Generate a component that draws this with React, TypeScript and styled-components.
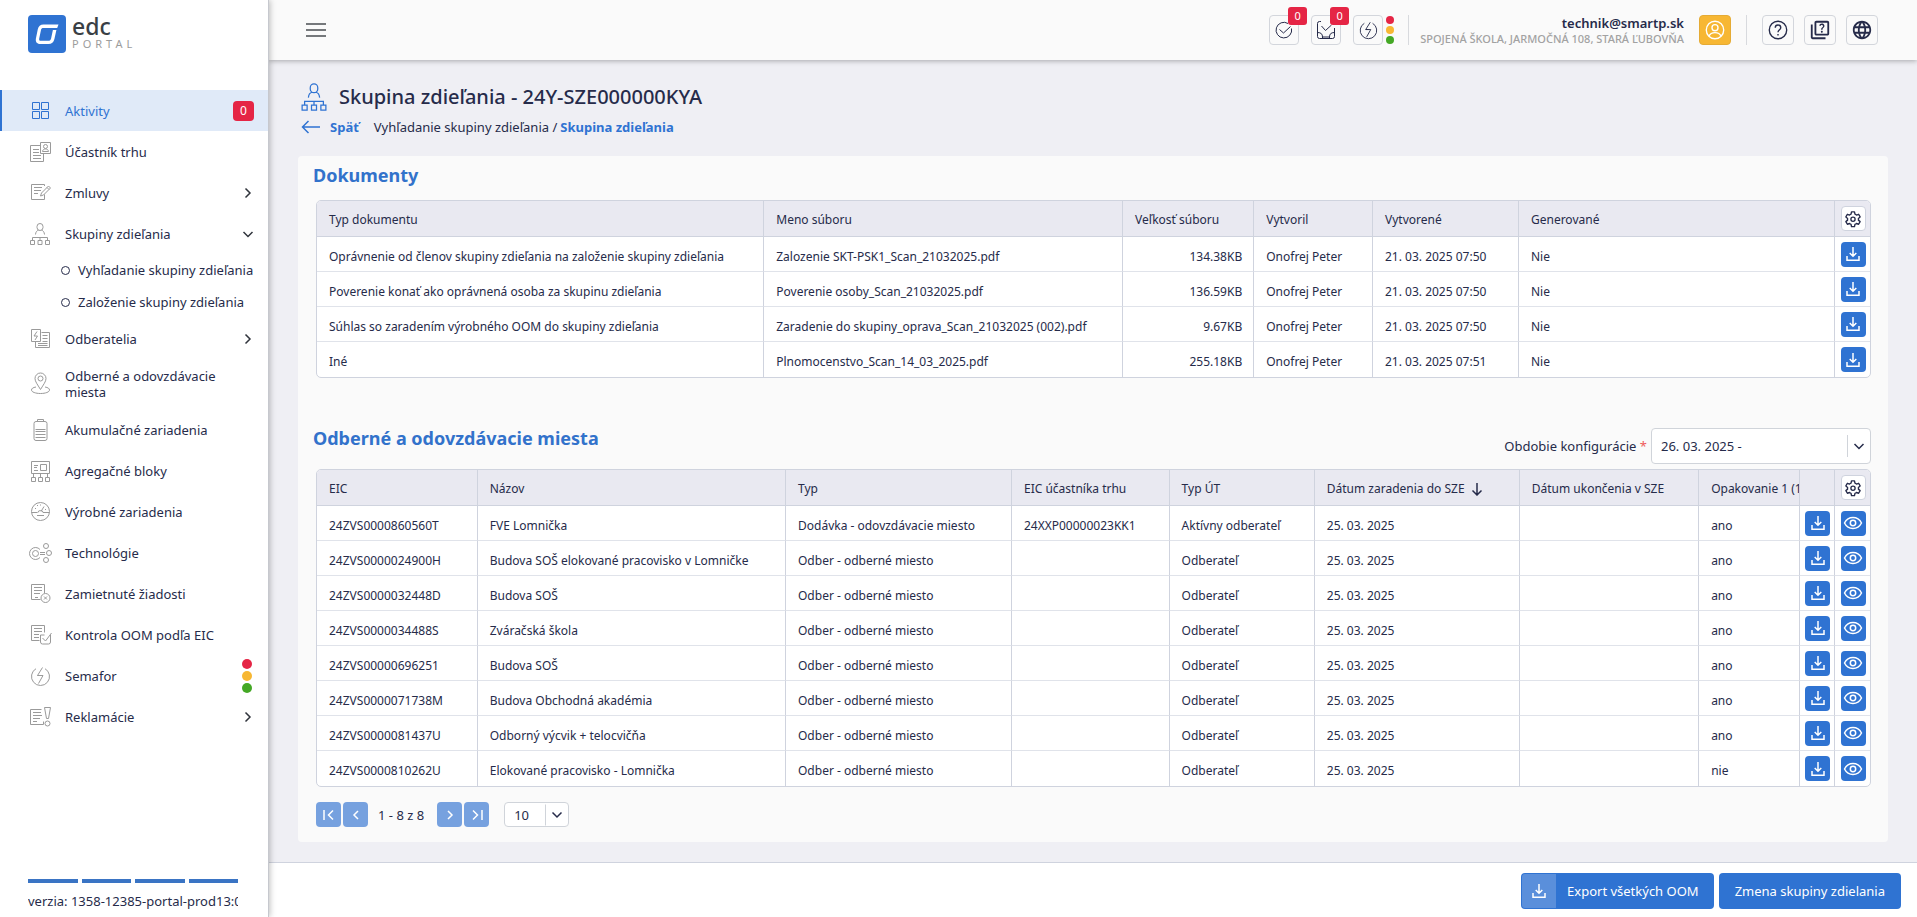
import React from 'react';
import styled, { createGlobalStyle, css } from 'styled-components';
import { MdLanguage, MdOutlineQuiz } from 'react-icons/md';

const c = {
  blue: '#2f73d2',
  heading: '#3272cb',
  text: '#262b4a',
  grey: '#9a9a9a',
  line: '#cfd3de',
  rowLine: '#e0e3ea',
  head: '#e9e9f1',
  page: '#efeff4',
  card: '#fafafa',
  red: '#e52545',
  yellow: '#f7b733',
  green: '#44a825',
};

const GlobalStyle = createGlobalStyle`
  *, *::before, *::after { box-sizing: border-box; }
  html, body, #root { height: 100%; }
  body {
    margin: 0;
    background: ${c.page};
    color: ${c.text};
    font-family: 'Noto Sans', 'Open Sans', sans-serif;
    font-size: 13px;
    line-height: 16px;
  }
  button, select { font: inherit; color: inherit; cursor: pointer; }
  svg { display: block; flex: none; }
  a { color: inherit; text-decoration: none; }
  h1, h2, ul, p { margin: 0; padding: 0; }
  ul { list-style: none; }
`;

/* ---------- page frame ---------- */

const Shell = styled.div`
  display: grid;
  grid-template-columns: 269px minmax(0, 1fr);
  min-height: 100vh;
`;

const Sidebar = styled.aside`
  display: flex;
  flex-direction: column;
  background: #fff;
  border-right: 1px solid #c6c8ce;
  box-shadow: 1px 0 6px rgba(0, 0, 0, 0.25);
  z-index: 2;
`;

const Main = styled.div`
  display: flex;
  flex-direction: column;
  min-width: 0;
`;

/* ---------- sidebar ---------- */

const Brand = styled.a`
  display: flex;
  gap: 6px;
  padding: 15px 28px 0;
  height: 90px;
`;

const BrandText = styled.span`
  display: flex;
  flex-direction: column;
`;

const BrandName = styled.span`
  font-size: 23px;
  line-height: 23px;
  font-weight: 500;
  color: #3a3f45;
`;

const BrandSub = styled.span`
  font-size: 11px;
  line-height: 12px;
  letter-spacing: 4px;
  color: #9c9c9c;
`;

const NavLink = styled.a<{ $active?: boolean; $tall?: boolean }>`
  display: flex;
  align-items: center;
  gap: 13px;
  height: ${(p) => (p.$tall ? 50 : 41)}px;
  padding: 0 14px 0 28px;
  color: ${(p) => (p.$active ? c.blue : c.text)};
  ${(p) =>
    p.$active &&
    css`
      background: #e0eaf8;
      box-shadow: inset 2px 0 0 ${c.blue};
    `}
  svg { color: ${(p) => (p.$active ? c.blue : c.grey)}; }
`;

const NavLabel = styled.span`
  flex: 1;
`;

const Chevron = styled.span`
  svg { color: #30343c; }
`;

const CountBadge = styled.span`
  width: 21px;
  height: 20px;
  border-radius: 4px;
  background: ${c.red};
  color: #fff;
  font-size: 12px;
  line-height: 20px;
  text-align: center;
`;

const SubLink = styled.a`
  display: flex;
  align-items: center;
  gap: 8px;
  height: 32px;
  padding-left: 61px;
  white-space: nowrap;
  &::before {
    content: '';
    width: 9px;
    height: 9px;
    border: 1px solid ${c.text};
    border-radius: 50%;
  }
`;

const Lights = styled.span<{ $small?: boolean }>`
  display: flex;
  flex-direction: column;
  gap: 2px;
  margin: ${(p) => (p.$small ? '0 0 0 3px' : '0 2px 0 0')};
  span {
    width: ${(p) => (p.$small ? 8 : 10)}px;
    height: ${(p) => (p.$small ? 8 : 10)}px;
    border-radius: 50%;
  }
  span:nth-child(1) { background: ${c.red}; }
  span:nth-child(2) { background: ${c.yellow}; }
  span:nth-child(3) { background: ${c.green}; }
`;

const Version = styled.div`
  margin: auto 30px 8px 28px;
  white-space: nowrap;
  overflow: hidden;
`;

const Bars = styled.div`
  display: grid;
  grid-template-columns: repeat(4, 1fr);
  gap: 4px;
  margin-bottom: 10px;
  span { height: 4px; background: #3a74c4; }
`;

/* ---------- top bar ---------- */

const TopBar = styled.header`
  display: flex;
  align-items: center;
  height: 60px;
  padding: 0 39px 0 36px;
  background: ${c.card};
  box-shadow: 0 1px 5px rgba(0, 0, 0, 0.3);
  z-index: 1;
`;

const PlainButton = styled.button`
  display: flex;
  padding: 0;
  border: 0;
  background: none;
  color: #4a4d52;
`;

const Tools = styled.div`
  display: flex;
  align-items: center;
  margin-left: auto;
`;

const ToolGroup = styled.div<{ $gap: number }>`
  display: flex;
  align-items: center;
  gap: ${(p) => p.$gap}px;
`;

const ToolButton = styled.button<{ $wide?: boolean; $filled?: boolean }>`
  position: relative;
  display: flex;
  align-items: center;
  justify-content: center;
  width: ${(p) => (p.$wide ? 32 : 30)}px;
  height: 30px;
  padding: 0;
  border: 1px solid ${(p) => (p.$filled ? '#e5ab35' : '#d3d6dc')};
  border-radius: 4px;
  background: ${(p) => (p.$filled ? c.yellow : '#fafafa')};
  color: ${(p) => (p.$filled ? '#fff' : c.text)};
`;

const ToolBadge = styled.span`
  position: absolute;
  top: -9px;
  right: -9px;
  width: 19px;
  height: 18px;
  border-radius: 3px;
  background: ${c.red};
  color: #fff;
  font-size: 11px;
  line-height: 18px;
`;

const Divider = styled.span`
  width: 1px;
  height: 30px;
  background: #d8dade;
`;

const Account = styled.div`
  padding: 2px 15px 0 11px;
  text-align: right;
  line-height: 15px;
  strong { display: block; font-weight: 600; font-size: 13px; }
  span { display: block; font-size: 11px; font-weight: 500; color: #a2a2a2; }
`;

/* ---------- page head ---------- */

const Content = styled.main`
  flex: 1;
  padding: 20px 29px 20px 29px;
`;

const TitleRow = styled.div`
  display: flex;
  align-items: center;
  gap: 10px;
  padding-left: 1px;
  height: 33px;
  color: ${c.blue};
  h1 {
    font-size: 20px;
    line-height: 28px;
    font-weight: 500;
    color: ${c.text};
  }
`;

const Crumbs = styled.nav`
  display: flex;
  align-items: center;
  height: 28px;
  margin-bottom: 15px;
  padding-left: 3px;
`;

const BackLink = styled.a`
  display: flex;
  align-items: center;
  gap: 9px;
  margin-right: 15px;
  font-weight: 700;
  color: ${c.blue};
`;

const Current = styled.span`
  margin-left: 3px;
  font-weight: 700;
  color: ${c.blue};
`;

/* ---------- card and tables ---------- */

const Card = styled.section`
  padding: 7px 17px 15px 18px;
  border-radius: 4px;
  background: ${c.card};
`;

const SectionTitle = styled.h2`
  margin-left: -3px;
  font-size: 18px;
  line-height: 24px;
  font-weight: 700;
  color: ${c.heading};
`;

const SectionHead = styled.div`
  display: flex;
  align-items: flex-start;
  justify-content: space-between;
  margin: 50px 0 5px;
  ${SectionTitle} { line-height: 20px; }
`;

const TableFrame = styled.div<{ $top?: number }>`
  margin-top: ${(p) => p.$top ?? 0}px;
  border: 1px solid ${c.line};
  border-radius: 5px;
  background: #fff;
  overflow: hidden;
`;

const Table = styled.table`
  width: 100%;
  table-layout: fixed;
  border-collapse: separate;
  border-spacing: 0;
  font-size: 12px;
  tr:last-child td { border-bottom: 0; }
  th:last-child, td:last-child { border-right: 0; }
`;

const Th = styled.th<{ $tool?: boolean }>`
  height: 36px;
  padding: ${(p) => (p.$tool ? '0 0 0 1px' : '2px 0 0 12px')};
  background: ${c.head};
  border-right: 1px solid ${c.line};
  border-bottom: 1px solid ${c.line};
  font-weight: 400;
  text-align: left;
  white-space: nowrap;
  overflow: hidden;
  > span { display: inline-flex; align-items: center; gap: 5px; }
`;

const Td = styled.td<{ $right?: boolean; $tool?: boolean }>`
  height: 35px;
  padding: ${(p) => (p.$tool ? '0 0 0 1px' : '5px 11px 0 12px')};
  border-right: 1px solid ${c.line};
  border-bottom: 1px solid ${c.rowLine};
  text-align: ${(p) => (p.$right ? 'right' : 'left')};
  white-space: nowrap;
`;

const CellButton = styled.button<{ $plain?: boolean }>`
  display: flex;
  align-items: center;
  justify-content: center;
  width: 25px;
  height: 25px;
  margin: 0 auto;
  padding: 0;
  border: ${(p) => (p.$plain ? `1px solid ${c.line}` : '0')};
  border-radius: 4px;
  background: ${(p) => (p.$plain ? '#fff' : c.blue)};
  color: ${(p) => (p.$plain ? c.text : '#fff')};
`;

const Field = styled.div`
  display: flex;
  align-items: center;
  gap: 4px;
  em { font-style: normal; color: #ef5a5a; }
`;

const SelectBox = styled.span<{ $w: number; $h: number; $line: number }>`
  position: relative;
  display: flex;
  width: ${(p) => p.$w}px;
  height: ${(p) => p.$h}px;
  border: 1px solid #d0d4da;
  border-radius: 4px;
  background: #fff;
  select {
    appearance: none;
    flex: 1;
    width: 100%;
    padding: 0 0 0 9px;
    border: 0;
    background: none;
    outline: 0;
  }
  > span {
    position: absolute;
    top: 50%;
    right: 0;
    transform: translateY(-50%);
    display: flex;
    align-items: center;
    justify-content: center;
    width: 23px;
    height: ${(p) => p.$line}px;
    border-left: 1px solid #d0d4da;
    pointer-events: none;
  }
`;

const Pager = styled.div`
  display: flex;
  align-items: center;
  gap: 2px;
  margin-top: 15px;
  p { padding: 0 11px 0 8px; font-size: 13px; }
  ${SelectBox} { margin-left: 13px; }
`;

const PageButton = styled.button`
  display: flex;
  align-items: center;
  justify-content: center;
  width: 25px;
  height: 25px;
  padding: 0;
  border: 0;
  border-radius: 4px;
  background: #76a1df;
  color: #fff;
`;

/* ---------- bottom bar ---------- */

const BottomBar = styled.footer`
  display: flex;
  justify-content: flex-end;
  gap: 5px;
  height: 55px;
  padding: 10px 16px 8px;
  background: #fff;
  border-top: 1px solid ${c.line};
`;

const ActionButton = styled.button<{ $icon?: boolean }>`
  display: flex;
  align-items: center;
  height: 36px;
  padding: ${(p) => (p.$icon ? '1px 15px 1px 1px' : '0 16px')};
  border: 0;
  border-radius: 4px;
  background: ${c.blue};
  color: #fff;
  > span {
    display: flex;
    align-items: center;
    justify-content: center;
    width: 34px;
    height: 34px;
    margin-right: 11px;
    border-radius: 3px 0 0 3px;
    background: #5a8fdb;
  }
`;

/* ---------- icons ---------- */

type IconProps = { d?: string; size?: number; w?: number; box?: number; children?: React.ReactNode };

const Icon = ({ d, size = 24, w = 1, box = 24, children }: IconProps) => (
  <svg width={size} height={size} viewBox={`0 0 ${box} ${box}`} fill="none" stroke="currentColor" strokeWidth={w} aria-hidden="true">
    {d && <path d={d} />}
    {children}
  </svg>
);

const peopleTree =
  'M12 1.5a3 3 0 0 1 3 3v1a3 3 0 0 1-6 0v-1a3 3 0 0 1 3-3zM7.5 12.5c.2-2.6 1.5-4 3-4.3M16.5 12.5c-.2-2.6-1.5-4-3-4.3M4.5 18.5v-3h15v3M12 15.5v3M2.5 18.5h4v4h-4zM10 18.5h4v4h-4zM17.5 18.5h4v4h-4z';

const navIcons: Record<string, string> = {
  grid: 'M4.5 3.5h7v7h-7zM13.5 3.5h7v7h-7zM4.5 12.5h7v7h-7zM13.5 12.5h7v7h-7z',
  market: 'M12.5 5.5h-10v16h13v-8M12.5 2.5h10v11h-10zM17.5 4.5a1.8 1.8 0 0 1 0 4a1.8 1.8 0 0 1 0-4M14.5 11.5c.3-2 1.5-2.5 3-2.5s2.7.5 3 2.5zM5 9.5h6M5 12.5h6M5 15.5h8M5 18.5h8',
  contract: 'M16.5 5V3.5h-13v15h13v-5M6 6.5h8M6 9.5h7M6 12.5h4M12.5 15l1-3 7-7 2 2-7 7zM19 6.5l2 2',
  people: peopleTree,
  customers: 'M13.5 5.5h8v15h-14v-6M3.5 2.5h9v12h-9zM9 4.5l-3 4.5h3.5L7 13M14.5 8.5h5M14.5 11.5h5M14.5 14.5h5M10 16.5h9.5M10 18.5h9.5',
  pin: 'M12.5 17.5c-3-5-5.5-8-5.5-11a5.5 5.5 0 0 1 11 0c0 3-2.5 6-5.5 11zM12.5 4a2.5 2.5 0 0 1 0 5a2.5 2.5 0 0 1 0-5M8 15c-3 .5-4.5 1.5-4.5 3 0 2 4 3.5 9 3.5s9-1.5 9-3.5c0-1.5-1.5-2.5-4.5-3',
  battery: 'M8 3.5h9a2 2 0 0 1 2 2v15a2 2 0 0 1-2 2H8a2 2 0 0 1-2-2v-15a2 2 0 0 1 2-2zM9.5 3.5v-2h6v2M7.5 11.5h10M7.5 13.5h10M7.5 16.5h10M7.5 19.5h10',
  blocks: 'M3.5 2.5h18v12h-18zM12.5 5.5h6v6h-6zM6 6.5h4M6 8.5h3M6 11.5h4M5.5 18v-3M12.5 18v-3M19.5 18v-3M3.5 18.5h4v4h-4zM10.5 18.5h4v4h-4zM17.5 18.5h4v4h-4z',
  gauge: 'M12.5 2.5a9 9 0 0 1 0 18a9 9 0 0 1 0-18M3.5 12.5h6M15 12.5h6.5M10 12.5a2.5 2 0 0 1 5 0M13 11.5l3-5M7 8.5h1M9 5.5h1M12 5h1M17 9.5h1M9 15.5h7',
  tech: 'M12 8.5a6 6 0 1 0 0 8M7.5 9.5a3 3 0 0 1 0 6a3 3 0 0 1 0-6M18 2.5a2.5 2.5 0 0 1 0 5a2.5 2.5 0 0 1 0-5M21 9.5a2.5 2.5 0 0 1 0 5a2.5 2.5 0 0 1 0-5M18 16.5a2.5 2.5 0 0 1 0 5a2.5 2.5 0 0 1 0-5M12 11.5h5M12 13.5h5',
  rejected: 'M16.5 11v-8.5h-13v15h9M6 5.5h8M6 8.5h8M6 11.5h6M7 15.5h3M17.5 11.5a4.5 4.5 0 0 1 0 9a4.5 4.5 0 0 1 0-9M16 14.5l3 3M19 14.5l-3 3',
  check: 'M16.5 9.5v-7h-13v15h8M6 5.5h8M6 8.5h8M6 11.5h5M6 14.5h5M22.5 12v7a2 2 0 0 1-2 2h-6a2 2 0 0 1-2-2v-7h4M14.5 15l3 3 6-8',
  bolt: 'M8 4.7a9 9 0 1 0 9 0M14.5 3.5l-5 8h5.5l-4.5 8M9.5 11.5h3',
  complaint: 'M13.5 4.5h-11v15h13v-3M5 7.5h8M5 10.5h9M5 13.5h7M5 16.5h4M16.5 2.5h6l-2 11h-2zM19.5 16a2 2 0 0 1 0 5a2 2 0 0 1 0-5',
};

const Logo = () => (
  <svg width="38" height="38" viewBox="0 0 38 38" aria-hidden="true">
    <rect width="38" height="38" rx="4" fill={c.blue} />
    <path
      d="M30.5 9.5H15.500c-3.200 0-5 1.600-5.700 4.700L8 23c-.8 3.700.8 6 4.200 6h8.200c3.300 0 5.300-1.700 6-5l2-9h-3.500l-1.800 8.500c-.4 1.600-1.200 2.300-2.800 2.300h-7.600c-1.300 0-1.800-.8-1.500-2.300l1.800-8.500c.3-1.500 1-2 2.500-2h13.700z"
      fill="#fff"
    />
  </svg>
);

const ChevronIcon = ({ dir }: { dir: 'right' | 'down' }) => (
  <Icon size={12} box={12} w={1.5} d={dir === 'right' ? 'M3.5 1.5L8 6l-4.5 4.5' : 'M1.5 4L6 8.5 10.5 4'} />
);

const Download = () => <Icon size={18} box={18} w={1.5} d="M9 2v9M5.7 8L9 11.2 12.3 8M3 11v4.2h12V11" />;

const Eye = () => (
  <Icon size={20} box={20} w={1.5}>
    <path d="M1.500 10c1.800-3.500 5-5.500 8.500-5.500s6.700 2 8.500 5.500c-1.800 3.500-5 5.500-8.500 5.500s-6.700-2-8.500-5.500z" />
    <circle cx="10" cy="10" r="2.7" />
  </Icon>
);

const Gear = () => (
  <Icon size={18} w={1.8}>
    <path
      d="M10 2.5h4l.6 3a7 7 0 0 1 2 1.200l2.900-1 2 3.500-2.300 2a7 7 0 0 1 0 2.300l2.300 2-2 3.500-2.900-1a7 7 0 0 1-2 1.200l-.6 3h-4l-.6-3a7 7 0 0 1-2-1.200l-2.900 1-2-3.500 2.300-2a7 7 0 0 1 0-2.300l-2.300-2 2-3.500 2.900 1a7 7 0 0 1 2-1.200z"
      strokeLinejoin="round"
    />
    <circle cx="12" cy="12.3" r="2.8" />
  </Icon>
);

const User = () => (
  <Icon size={22} w={1.5}>
    <circle cx="12" cy="12" r="9.5" />
    <circle cx="12" cy="9.5" r="3.3" />
    <path d="M5.5 18.5c1-2.500 3.500-3.700 6.500-3.700s5.500 1.200 6.500 3.700" />
  </Icon>
);

const Help = () => (
  <Icon size={22} w={1.5}>
    <circle cx="12" cy="12" r="9.5" />
    <path d="M9 9.5a3 3 0 0 1 6 0c0 2-3 2.500-3 5M12 16.3v1.7" />
  </Icon>
);

/* ---------- data ---------- */

type NavItem = { icon: string; label: string; mark?: 'right' | 'down' | 'count' | 'lights'; tall?: boolean; sub?: string[] };

const nav: NavItem[] = [
  { icon: 'grid', label: 'Aktivity', mark: 'count' },
  { icon: 'market', label: 'Účastník trhu' },
  { icon: 'contract', label: 'Zmluvy', mark: 'right' },
  { icon: 'people', label: 'Skupiny zdieľania', mark: 'down', sub: ['Vyhľadanie skupiny zdieľania', 'Založenie skupiny zdieľania'] },
  { icon: 'customers', label: 'Odberatelia', mark: 'right' },
  { icon: 'pin', label: 'Odberné a odovzdávacie miesta', tall: true },
  { icon: 'battery', label: 'Akumulačné zariadenia' },
  { icon: 'blocks', label: 'Agregačné bloky' },
  { icon: 'gauge', label: 'Výrobné zariadenia' },
  { icon: 'tech', label: 'Technológie' },
  { icon: 'rejected', label: 'Zamietnuté žiadosti' },
  { icon: 'check', label: 'Kontrola OOM podľa EIC' },
  { icon: 'bolt', label: 'Semafor', mark: 'lights' },
  { icon: 'complaint', label: 'Reklamácie', mark: 'right' },
];

const docs = [
  ['Oprávnenie od členov skupiny zdieľania na založenie skupiny zdieľania', 'Zalozenie SKT-PSK1_Scan_21032025.pdf', '134.38KB', 'Onofrej Peter', '21. 03. 2025 07:50', 'Nie'],
  ['Poverenie konať ako oprávnená osoba za skupinu zdieľania', 'Poverenie osoby_Scan_21032025.pdf', '136.59KB', 'Onofrej Peter', '21. 03. 2025 07:50', 'Nie'],
  ['Súhlas so zaradením výrobného OOM do skupiny zdieľania', 'Zaradenie do skupiny_oprava_Scan_21032025 (002).pdf', '9.67KB', 'Onofrej Peter', '21. 03. 2025 07:50', 'Nie'],
  ['Iné', 'Plnomocenstvo_Scan_14_03_2025.pdf', '255.18KB', 'Onofrej Peter', '21. 03. 2025 07:51', 'Nie'],
];
const docCols = ['Typ dokumentu', 'Meno súboru', 'Veľkosť súboru', 'Vytvoril', 'Vytvorené', 'Generované'];
const docWidths = ['28.8%', '23.1%', '8.45%', '7.65%', '9.4%', 'auto', '35px'];

const odber = 'Odber - odberné miesto';
const places = [
  ['24ZVS0000860560T', 'FVE Lomnička', 'Dodávka - odovzdávacie miesto', '24XXP00000023KK1', 'Aktívny odberateľ', '25. 03. 2025', '', 'ano'],
  ['24ZVS0000024900H', 'Budova SOŠ elokované pracovisko v Lomničke', odber, '', 'Odberateľ', '25. 03. 2025', '', 'ano'],
  ['24ZVS0000032448D', 'Budova SOŠ', odber, '', 'Odberateľ', '25. 03. 2025', '', 'ano'],
  ['24ZVS0000034488S', 'Zváračská škola', odber, '', 'Odberateľ', '25. 03. 2025', '', 'ano'],
  ['24ZVS00000696251', 'Budova SOŠ', odber, '', 'Odberateľ', '25. 03. 2025', '', 'ano'],
  ['24ZVS0000071738M', 'Budova Obchodná akadémia', odber, '', 'Odberateľ', '25. 03. 2025', '', 'ano'],
  ['24ZVS0000081437U', 'Odborný výcvik + telocvičňa', odber, '', 'Odberateľ', '25. 03. 2025', '', 'ano'],
  ['24ZVS0000810262U', 'Elokované pracovisko - Lomnička', odber, '', 'Odberateľ', '25. 03. 2025', '', 'nie'],
];
const placeCols = ['EIC', 'Názov', 'Typ', 'EIC účastníka trhu', 'Typ ÚT', 'Dátum zaradenia do SZE', 'Dátum ukončenia v SZE', 'Opakovanie 1 (1'];
const placeWidths = ['10.35%', '19.85%', '14.55%', '10.15%', '9.35%', '13.2%', '11.55%', 'auto', '35px', '35px'];

const ColGroup = ({ widths }: { widths: string[] }) => (
  <colgroup>
    {widths.map((width, i) => (
      <col key={i} width={width} />
    ))}
  </colgroup>
);

const SettingsButton = () => (
  <CellButton $plain aria-label="Nastavenia stĺpcov">
    <Gear />
  </CellButton>
);

const NavMark = ({ mark }: { mark?: NavItem['mark'] }) => {
  if (mark === 'count') return <CountBadge>0</CountBadge>;
  if (mark === 'lights') return <Lights><span /><span /><span /></Lights>;
  if (mark) return <Chevron><ChevronIcon dir={mark} /></Chevron>;
  return null;
};

export default function App() {
  return (
    <>
      <GlobalStyle />
      <Shell>
        <Sidebar>
          <Brand href="#">
            <Logo />
            <BrandText>
              <BrandName>edc</BrandName>
              <BrandSub>PORTAL</BrandSub>
            </BrandText>
          </Brand>
          <nav>
            <ul>
              {nav.map((item, i) => (
                <li key={item.label}>
                  <NavLink href="#" $active={i === 0} $tall={item.tall}>
                    <Icon d={navIcons[item.icon]} />
                    <NavLabel>{item.label}</NavLabel>
                    <NavMark mark={item.mark} />
                  </NavLink>
                  {item.sub && (
                    <ul>
                      {item.sub.map((s) => (
                        <li key={s}><SubLink href="#">{s}</SubLink></li>
                      ))}
                    </ul>
                  )}
                </li>
              ))}
            </ul>
          </nav>
          <Version>
            <Bars><span /><span /><span /><span /></Bars>
            verzia: 1358-12385-portal-prod13:0
          </Version>
        </Sidebar>

        <Main>
          <TopBar>
            <PlainButton aria-label="Menu">
              <svg width="22" height="16" viewBox="0 0 22 16" fill="none" stroke="currentColor" strokeWidth="1.5">
                <path d="M1 2h20M1 8h20M1 14h20" />
              </svg>
            </PlainButton>
            <Tools>
              <ToolGroup $gap={12}>
                <ToolButton aria-label="Úlohy">
                  <Icon size={20} box={20} d="M17.5 8.5a7.8 7.8 0 1 1-3.5-5M5.5 9.5l4 3.5L16.5 6.5" />
                  <ToolBadge>0</ToolBadge>
                </ToolButton>
                <ToolButton aria-label="Správy">
                  <Icon size={20} box={20} d="M5 1.5H3.5a2 2 0 0 0-2 2v13a2 2 0 0 0 2 2h13a2 2 0 0 0 2-2V8M1.5 12.5c3.5 0 5 1.5 5 4.5h7c0-3 1.5-4.5 5-4.5M6.5 17v1.5M13.5 17v1.5M5.5 6l4 4.5L15.5 5" />
                  <ToolBadge>0</ToolBadge>
                </ToolButton>
                <ToolButton aria-label="Semafor">
                  <Icon size={22} d={navIcons.bolt} />
                </ToolButton>
              </ToolGroup>
              <ToolGroup $gap={14}>
                <Lights $small><span /><span /><span /></Lights>
                <Divider />
              </ToolGroup>
              <Account>
                <strong>technik@smartp.sk</strong>
                <span>SPOJENÁ ŠKOLA, JARMOČNÁ 108, STARÁ ĽUBOVŇA</span>
              </Account>
              <ToolGroup $gap={15}>
                <ToolButton $wide $filled aria-label="Profil"><User /></ToolButton>
                <Divider />
                <ToolGroup $gap={10}>
                  <ToolButton $wide aria-label="Pomoc"><Help /></ToolButton>
                  <ToolButton $wide aria-label="Otázky"><MdOutlineQuiz size={22} /></ToolButton>
                  <ToolButton $wide aria-label="Jazyk"><MdLanguage size={22} /></ToolButton>
                </ToolGroup>
              </ToolGroup>
            </Tools>
          </TopBar>

          <Content>
            <TitleRow>
              <Icon size={30} d={peopleTree} />
              <h1>Skupina zdieľania - 24Y-SZE000000KYA</h1>
            </TitleRow>
            <Crumbs>
              <BackLink href="#">
                <Icon size={20} box={20} w={1.5} d="M19 10H1.5M7.5 4L1.5 10l6 6" />
                Späť
              </BackLink>
              <a href="#">Vyhľadanie skupiny zdieľania</a>&nbsp;/<Current>Skupina zdieľania</Current>
            </Crumbs>

            <Card>
              <SectionTitle>Dokumenty</SectionTitle>
              <TableFrame $top={13}>
                <Table>
                  <ColGroup widths={docWidths} />
                  <thead>
                    <tr>
                      {docCols.map((h) => <Th key={h}>{h}</Th>)}
                      <Th $tool><SettingsButton /></Th>
                    </tr>
                  </thead>
                  <tbody>
                    {docs.map((row) => (
                      <tr key={row[0]}>
                        {row.map((v, i) => <Td key={i} $right={i === 2}>{v}</Td>)}
                        <Td $tool><CellButton aria-label="Stiahnuť"><Download /></CellButton></Td>
                      </tr>
                    ))}
                  </tbody>
                </Table>
              </TableFrame>

              <SectionHead>
                <SectionTitle>Odberné a odovzdávacie miesta</SectionTitle>
                <Field>
                  <label htmlFor="period">Obdobie konfigurácie <em>*</em></label>
                  <SelectBox $w={220} $h={36} $line={22}>
                    <select id="period"><option>26. 03. 2025 -</option></select>
                    <span><ChevronIcon dir="down" /></span>
                  </SelectBox>
                </Field>
              </SectionHead>
              <TableFrame>
                <Table>
                  <ColGroup widths={placeWidths} />
                  <thead>
                    <tr>
                      {placeCols.map((h, i) => (
                        <Th key={h}>
                          {i === 5 ? (
                            <span>{h}<Icon size={14} box={14} w={1.5} d="M7 1v12M2.5 8.5L7 13l4.5-4.5" /></span>
                          ) : h}
                        </Th>
                      ))}
                      <Th />
                      <Th $tool><SettingsButton /></Th>
                    </tr>
                  </thead>
                  <tbody>
                    {places.map((row) => (
                      <tr key={row[0]}>
                        {row.map((v, i) => <Td key={i}>{v}</Td>)}
                        <Td $tool><CellButton aria-label="Stiahnuť"><Download /></CellButton></Td>
                        <Td $tool><CellButton aria-label="Zobraziť"><Eye /></CellButton></Td>
                      </tr>
                    ))}
                  </tbody>
                </Table>
              </TableFrame>

              <Pager>
                <PageButton aria-label="Prvá"><Icon size={16} box={16} w={1.5} d="M3 3v10M12 3.5L7.5 8l4.5 4.5" /></PageButton>
                <PageButton aria-label="Predchádzajúca"><Icon size={16} box={16} w={1.5} d="M10 4L6 8l4 4" /></PageButton>
                <p>1 - 8 z 8</p>
                <PageButton aria-label="Nasledujúca"><Icon size={16} box={16} w={1.5} d="M6 4l4 4-4 4" /></PageButton>
                <PageButton aria-label="Posledná"><Icon size={16} box={16} w={1.5} d="M13 3v10M4 3.5L8.5 8 4 12.5" /></PageButton>
                <SelectBox $w={65} $h={25} $line={21}>
                  <select aria-label="Počet riadkov"><option>10</option></select>
                  <span><ChevronIcon dir="down" /></span>
                </SelectBox>
              </Pager>
            </Card>
          </Content>

          <BottomBar>
            <ActionButton $icon><span><Download /></span>Export všetkých OOM</ActionButton>
            <ActionButton>Zmena skupiny zdielania</ActionButton>
          </BottomBar>
        </Main>
      </Shell>
    </>
  );
}
